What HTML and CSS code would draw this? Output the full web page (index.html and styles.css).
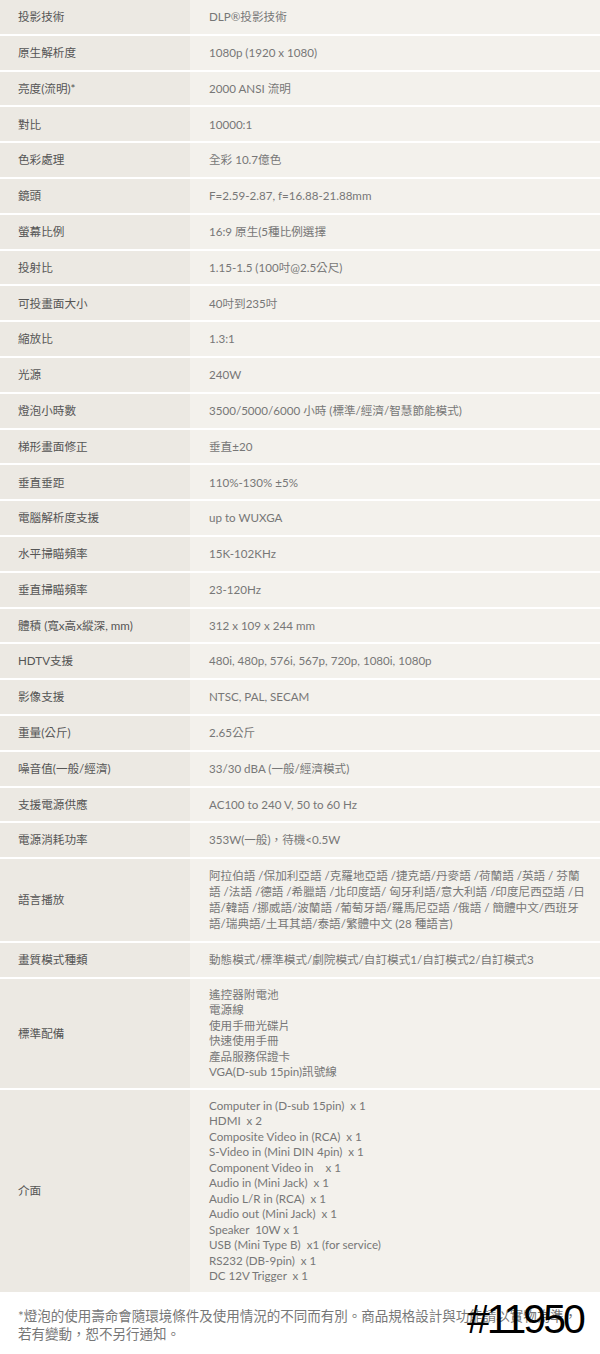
FILE: index.html
```html
<!DOCTYPE html>
<html lang="zh-Hant">
<head>
<meta charset="utf-8">
<title>規格</title>
<link rel="stylesheet" href="styles.css">
</head>
<body>
<div class="page">
  <div class="specs">
    <div class="row"><div class="k">投影技術</div><div class="v">DLP®投影技術</div></div>
    <div class="row"><div class="k">原生解析度</div><div class="v">1080p (1920 x 1080)</div></div>
    <div class="row"><div class="k">亮度(流明)*</div><div class="v">2000 ANSI 流明</div></div>
    <div class="row"><div class="k">對比</div><div class="v">10000:1</div></div>
    <div class="row"><div class="k">色彩處理</div><div class="v">全彩 10.7億色</div></div>
    <div class="row"><div class="k">鏡頭</div><div class="v">F=2.59-2.87, f=16.88-21.88mm</div></div>
    <div class="row"><div class="k">螢幕比例</div><div class="v">16:9 原生(5種比例選擇</div></div>
    <div class="row"><div class="k">投射比</div><div class="v">1.15-1.5 (100吋@2.5公尺)</div></div>
    <div class="row"><div class="k">可投畫面大小</div><div class="v">40吋到235吋</div></div>
    <div class="row"><div class="k">縮放比</div><div class="v">1.3:1</div></div>
    <div class="row"><div class="k">光源</div><div class="v">240W</div></div>
    <div class="row"><div class="k">燈泡小時數</div><div class="v">3500/5000/6000 小時 (標準/經濟/智慧節能模式)</div></div>
    <div class="row"><div class="k">梯形畫面修正</div><div class="v">垂直±20</div></div>
    <div class="row"><div class="k">垂直垂距</div><div class="v">110%-130% ±5%</div></div>
    <div class="row"><div class="k">電腦解析度支援</div><div class="v">up to WUXGA</div></div>
    <div class="row"><div class="k">水平掃瞄頻率</div><div class="v">15K-102KHz</div></div>
    <div class="row"><div class="k">垂直掃瞄頻率</div><div class="v">23-120Hz</div></div>
    <div class="row"><div class="k">體積 (寬x高x縱深, mm)</div><div class="v">312 x 109 x 244 mm</div></div>
    <div class="row"><div class="k">HDTV支援</div><div class="v">480i, 480p, 576i, 567p, 720p, 1080i, 1080p</div></div>
    <div class="row"><div class="k">影像支援</div><div class="v">NTSC, PAL, SECAM</div></div>
    <div class="row"><div class="k">重量(公斤)</div><div class="v">2.65公斤</div></div>
    <div class="row"><div class="k">噪音值(一般/經濟)</div><div class="v">33/30 dBA (一般/經濟模式)</div></div>
    <div class="row"><div class="k">支援電源供應</div><div class="v">AC100 to 240 V, 50 to 60 Hz</div></div>
    <div class="row"><div class="k">電源消耗功率</div><div class="v">353W(一般)，待機&lt;0.5W</div></div>
    <div class="row multi lang"><div class="k">語言播放</div><div class="v">阿拉伯語 /保加利亞語 /克羅地亞語 /捷克語/丹麥語 /荷蘭語 /英語 / 芬蘭語 /法語 /德語 /希臘語 /北印度語/ 匈牙利語/意大利語 /印度尼西亞語 /日語/韓語 /挪威語/波蘭語 /葡萄牙語/羅馬尼亞語 /俄語 / 簡體中文/西班牙語/瑞典語/土耳其語/泰語/繁體中文 (28 種語言)</div></div>
    <div class="row"><div class="k">畫質模式種類</div><div class="v">動態模式/標準模式/劇院模式/自訂模式1/自訂模式2/自訂模式3</div></div>
    <div class="row multi"><div class="k">標準配備</div><div class="v">遙控器附電池<br>電源線<br>使用手冊光碟片<br>快速使用手冊<br>產品服務保證卡<br>VGA(D-sub 15pin)訊號線</div></div>
    <div class="row multi last"><div class="k">介面</div><div class="v">Computer in (D-sub 15pin)&nbsp; x 1<br>HDMI&nbsp; x 2<br>Composite Video in (RCA)&nbsp; x 1<br>S-Video in (Mini DIN 4pin)&nbsp; x 1<br>Component Video in&nbsp;&nbsp;&nbsp; x 1<br>Audio in (Mini Jack)&nbsp; x 1<br>Audio L/R in (RCA)&nbsp; x 1<br>Audio out (Mini Jack)&nbsp; x 1<br>Speaker&nbsp; 10W x 1<br>USB (Mini Type B)&nbsp; x1 (for service)<br>RS232 (DB-9pin)&nbsp; x 1<br>DC 12V Trigger&nbsp; x 1</div></div>
  </div>
  <div class="note">
    <p>*燈泡的使用壽命會隨環境條件及使用情況的不同而有別。商品規格設計與功能請以實物為準，若有變動，恕不另行通知。</p>
    <span class="tag">#11950</span>
  </div>
</div>
</body>
</html>
```

FILE: styles.css
```css
html, body {
  margin: 0;
  padding: 0;
  background: #ffffff;
}

body {
  font-family: "Lato", "Noto Sans CJK TC", sans-serif;
  font-size: 11.6px;
  color: #777;
}

.page {
  width: 600px;
}

.specs {
  display: flex;
  flex-direction: column;
}

.row {
  display: grid;
  grid-template-columns: 190px 1fr;
  min-height: 33.8px;
  border-bottom: 2px solid #ffffff;
}

.row.last {
  border-bottom: 0;
}

.k, .v {
  display: flex;
  align-items: center;
  padding: 8px 14px 8px 18px;
  line-height: 15.5px;
}

.k {
  background: #ece9e3;
  color: #555;
}

.v {
  background: #f3f1ec;
  color: #777;
  padding-left: 19px;
}

.row.lang .v {
  padding-top: 9px;
  padding-bottom: 9px;
  line-height: 16px;
}

.note {
  position: relative;
  padding: 15px 10px 8px 18px;
}

.note p {
  margin: 0;
  font-size: 13.5px;
  line-height: 18px;
  color: #777;
}

.tag {
  position: absolute;
  left: 467px;
  top: 3px;
  font-family: "Liberation Sans", Arial, sans-serif;
  font-size: 41px;
  line-height: 48px;
  letter-spacing: -3px;
  color: #000;
}
```
